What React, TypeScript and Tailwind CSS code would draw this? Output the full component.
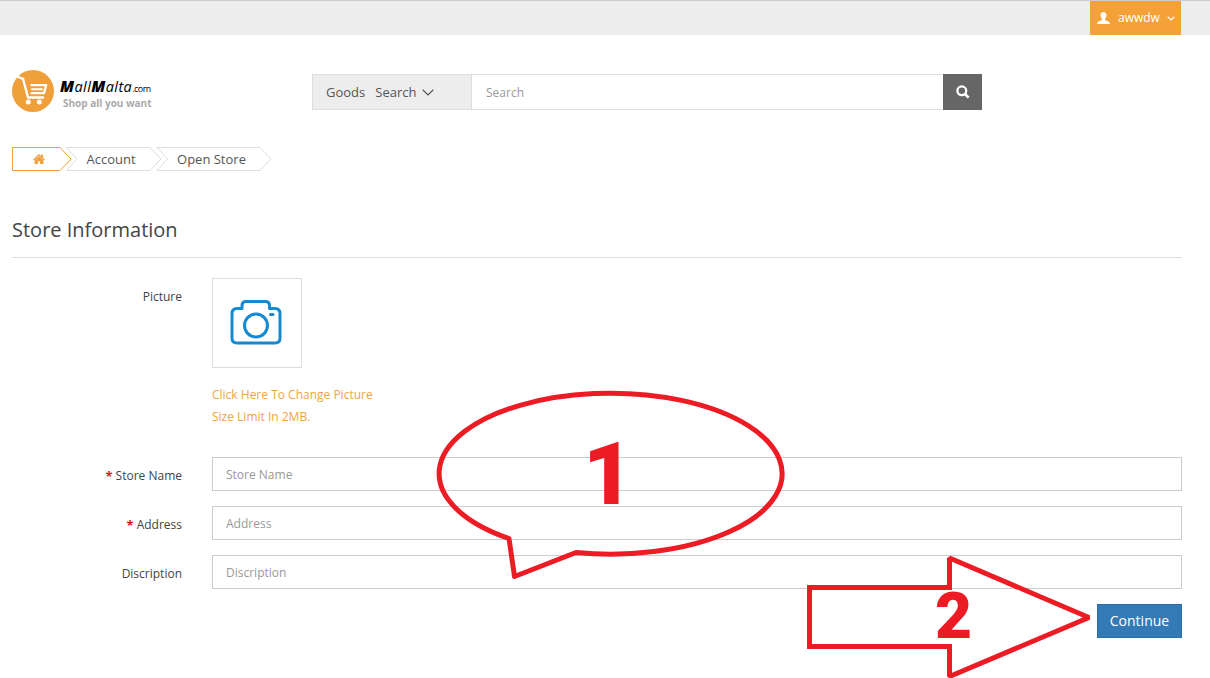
import React from "react";

function UserIcon() {
  return (
    <svg width="13" height="12" viewBox="0 0 13 12" fill="#fff">
      <path d="M6.5 0C8.5 0 9.6 1.3 9.5 3.3C9.4 4.8 8.9 6 8.1 6.7V8C9.2 8.7 12 9.3 12.6 10.5L12.9 12H.1L.4 10.5C1 9.3 3.8 8.7 4.9 8V6.7C4.1 6 3.6 4.8 3.5 3.3C3.4 1.3 4.5 0 6.5 0Z" />
    </svg>
  );
}

function HomeIcon() {
  return (
    <svg width="12" height="10" viewBox="0 0 12 10" fill="#f0a03c">
      <path d="M6 0L8.2 2V.6H10V3.7L12 5.6L11.2 6.4L6 1.7L.8 6.4L0 5.6Z" />
      <path d="M6 2.2L10.4 6V10H7.1V7.2H4.9V10H1.6V6Z" />
    </svg>
  );
}

function SearchIcon() {
  return (
    <svg width="14" height="14" viewBox="0 0 14 14" fill="none" stroke="#fff">
      <circle cx="5.8" cy="5.8" r="4.4" strokeWidth="2.3" />
      <path d="M9 9L12.6 12.6" strokeWidth="2.6" />
    </svg>
  );
}

function Chevron({ width, height, color }: { width: number; height: number; color: string }) {
  return (
    <svg width={width} height={height} viewBox={`0 0 ${width} ${height}`} fill="none" stroke={color} strokeWidth="1.2">
      <polyline points={`0.7,0.8 ${width / 2},${height - 1} ${width - 0.7},0.8`} />
    </svg>
  );
}

function Logo() {
  return (
    <div className="flex w-[300px] items-start">
      <svg width="42" height="42" viewBox="0 0 42 42" className="shrink-0">
        <circle cx="21" cy="21" r="21" fill="#efa03a" />
        <g fill="none" stroke="#fff" strokeLinecap="round" strokeLinejoin="round">
          <path d="M5 6.5L11 8.8L16 27.5H31" strokeWidth="2.4" />
          <path d="M19.5 15.2H34.2L32 23.2H19.5" strokeWidth="2.3" />
          <path d="M20 19.2H30" strokeWidth="2" />
        </g>
        <circle cx="16.3" cy="32" r="2.5" fill="#fff" />
        <circle cx="27.3" cy="32" r="2.5" fill="#fff" />
      </svg>
      <div className="flex flex-col pt-[7px] pl-[6px] whitespace-nowrap">
        <div className="flex h-[20px] items-baseline text-black">
          <span className="text-[14.5px] leading-[18px] tracking-[0.4px] italic">
            <b className="text-[15.5px] font-extrabold">M</b>all<b className="text-[15.5px] font-extrabold">M</b>alta
          </span>
          <span className="text-[9px] leading-[18px] tracking-[-0.5px]">.com</span>
        </div>
        <div className="pl-[3px] text-[10px] leading-[13px] font-bold text-[#aaa]">Shop all you want</div>
      </div>
    </div>
  );
}

function Crumb({ points, width, className, children }: { points: string; width: number; className: string; children: React.ReactNode }) {
  return (
    <li className={`relative flex h-6 items-center justify-center text-[13px] ${className}`}>
      <svg className="absolute inset-0" width={width} height="24" fill="none" stroke="currentColor">
        <polygon points={points} />
      </svg>
      {children}
    </li>
  );
}

function Field({ label, required, gap }: { label: string; required?: boolean; gap: string }) {
  return (
    <div className={`flex h-[34px] ${gap}`}>
      <label className="flex h-[38px] w-[170px] items-center justify-end text-[12px] leading-[18px] text-[#444]">
        {required && <span className="mr-[3px] text-[13px] font-bold text-[#d9161c]">*</span>}
        <span>{label}</span>
      </label>
      <input
        placeholder={label}
        className="ml-[30px] h-[34px] w-[970px] border border-[#ccc] bg-white px-[13px] text-[12px] text-[#555] placeholder:text-[#999]"
      />
    </div>
  );
}

function Annotations() {
  return (
    <svg className="pointer-events-none absolute inset-0" width="1210" height="678" viewBox="0 0 1210 678">
      <g fill="none" stroke="#ed1c24" strokeWidth="5" strokeLinejoin="round">
        <path d="M509 538.5A171.5 80.5 0 1 1 576 552.5L514.5 576.5Z" />
        <path d="M809.5 587.5H949.5V558L1089 617.5L949.5 676.5V646.5H809.5Z" strokeLinejoin="miter" strokeMiterlimit="1.5" />
      </g>
      <g fill="#ed1c24" fontFamily="Roboto, sans-serif" fontWeight="900">
        <text x="583" y="504" fontSize="87">1</text>
        <text x="935" y="638" fontSize="64">2</text>
      </g>
    </svg>
  );
}

export default function App() {
  return (
    <div className="relative h-[678px] w-[1210px] overflow-hidden bg-white font-['Open_Sans',sans-serif] text-[#444]">
      <header className="flex h-[35px] justify-end border-t border-[#ccc] bg-[#ededed] pr-[29px]">
        <button className="flex h-[34px] w-[91px] items-center bg-[#f4a137] pl-[7px] text-white">
          <UserIcon />
          <span className="ml-[8px] w-[42px] text-left text-[12px] leading-none">awwdw</span>
          <span className="ml-[7px]">
            <Chevron width={8} height={5} color="#fff" />
          </span>
        </button>
      </header>

      <div className="flex pt-[35px] pl-[12px]">
        <Logo />
        <div className="mt-[4px] flex h-[36px]">
          <button className="flex w-[160px] items-center border border-[#ddd] bg-[#ededed] pl-[13px] text-[13px] text-[#555]">
            <span className="pt-[2px]">Goods</span>
            <span className="mr-[6px] ml-[10px] pt-[2px]">Search</span>
            <Chevron width={12} height={7} color="#555" />
          </button>
          <input
            placeholder="Search"
            className="w-[471px] border-y border-[#ddd] pt-[2px] pl-[14px] text-[12px] placeholder:text-[#999]"
          />
          <button className="flex w-[39px] items-center justify-center bg-[#666]">
            <SearchIcon />
          </button>
        </div>
      </div>

      <ul className="mt-[35px] ml-[12px] flex h-6">
        <Crumb width={60} points="0.5,0.5 48,0.5 59,12 48,23.5 0.5,23.5" className="w-[54px] text-[#f0a03c]">
          <HomeIcon />
        </Crumb>
        <Crumb width={96} points="0.5,0.5 84,0.5 95,12 84,23.5 0.5,23.5 11,12" className="w-[90px] text-[#ddd]">
          <span className="pt-[2px] text-[#555]">Account</span>
        </Crumb>
        <Crumb width={116} points="1,0.5 104,0.5 115,12 104,23.5 1,23.5 11.5,12" className="w-[111px] text-[#ddd]">
          <span className="pt-[2px] text-[#555]">Open Store</span>
        </Crumb>
      </ul>

      <main className="ml-[12px] w-[1170px]">
        <h1 className="mt-[44px] h-[43px] border-b border-[#ddd] text-[20px] leading-[30px] text-[#444]">Store Information</h1>

        <div className="mt-[20px] flex h-[179px]">
          <div className="w-[170px] pt-[10px] text-right text-[12px] leading-[18px]">Picture</div>
          <div className="ml-[30px]">
            <div className="flex h-[90px] w-[90px] items-center justify-center border border-[#ddd] pr-[2px] pb-[2px]">
              <svg width="52" height="46" viewBox="0 0 52 46" fill="none" stroke="#1689d3" strokeWidth="3" strokeLinecap="round" strokeLinejoin="round">
                <path d="M12 9.5V6.5Q12 2.5 16 2.5H35.5Q39.5 2.5 39.5 6.5V9.5H45Q50 9.5 50 14.5V39Q50 44 45 44H7Q2 44 2 39V14.5Q2 9.5 7 9.5Z" />
                <circle cx="26" cy="26.5" r="11.5" />
                <path d="M40.5 15.5H43" />
              </svg>
            </div>
            <div className="mt-[16px] text-[12px] leading-[22px] text-[#efa347]">
              <div>Click Here To Change Picture</div>
              <div>Size Limit In 2MB.</div>
            </div>
          </div>
        </div>

        <Field label="Store Name" required gap="" />
        <Field label="Address" required gap="mt-[15px]" />
        <Field label="Discription" gap="mt-[15px]" />
        <div className="mt-[15px] flex justify-end">
          <button className="h-[34px] w-[85px] border border-[#2e6da4] bg-[#337ab7] pb-[2px] text-[14px] text-white">Continue</button>
        </div>
      </main>
      <Annotations />
    </div>
  );
}
